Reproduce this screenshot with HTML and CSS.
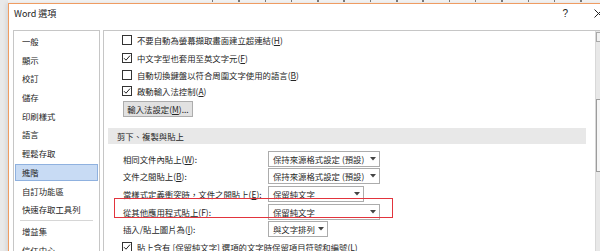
FILE: index.html
```html
<!DOCTYPE html>
<html lang="zh-Hant">
<head>
<meta charset="utf-8">
<title>Word 選項</title>
<link rel="stylesheet" href="styles.css">
</head>
<body>
<div class="ruler"><div class="ticks"></div></div>
<div class="dialog">
  <div class="titlebar">
    <span class="title">Word 選項</span>
    <span class="help">?</span>
    <svg class="close" width="9" height="9" viewBox="0 0 9 9"><path d="M0.5 0.5L8.5 8.5M8.5 0.5L0.5 8.5" stroke="#222" stroke-width="1"/></svg>
  </div>
  <div class="main">
    <nav class="nav">
      <div class="item">一般</div>
      <div class="item">顯示</div>
      <div class="item">校訂</div>
      <div class="item">儲存</div>
      <div class="item">印刷樣式</div>
      <div class="item">語言</div>
      <div class="item">輕鬆存取</div>
      <div class="item sel">進階</div>
      <div class="item">自訂功能區</div>
      <div class="item">快速存取工具列</div>
      <div class="sep"></div>
      <div class="item">增益集</div>
      <div class="item">信任中心</div>
    </nav>
    <section class="panel">
      <div class="scrollarea">
        <div class="chk-row first">
          <svg class="chk" width="10" height="10" viewBox="0 0 10 10"><rect x="0.5" y="0.5" width="9" height="9" fill="#fff" stroke="#333"/></svg>
          <span>不要自動為螢幕擷取畫面建立超連結(<u>H</u>)</span>
        </div>
        <div class="chk-row">
          <svg class="chk" width="10" height="10" viewBox="0 0 10 10"><rect x="0.5" y="0.5" width="9" height="9" fill="#fff" stroke="#333"/><path d="M2 5.2L4 7.2L8 2.6" fill="none" stroke="#222" stroke-width="1"/></svg>
          <span>中文字型也套用至英文字元(<u>F</u>)</span>
        </div>
        <div class="chk-row">
          <svg class="chk" width="10" height="10" viewBox="0 0 10 10"><rect x="0.5" y="0.5" width="9" height="9" fill="#fff" stroke="#333"/></svg>
          <span>自動切換鍵盤以符合周圍文字使用的語言(<u>B</u>)</span>
        </div>
        <div class="chk-row">
          <svg class="chk" width="10" height="10" viewBox="0 0 10 10"><rect x="0.5" y="0.5" width="9" height="9" fill="#fff" stroke="#333"/><path d="M2 5.2L4 7.2L8 2.6" fill="none" stroke="#222" stroke-width="1"/></svg>
          <span>啟動輸入法控制(<u>A</u>)</span>
        </div>
        <div class="button">輸入法設定(<u>M</u>)...</div>
        <div class="section">剪下、複製與貼上</div>
        <div class="form">
          <span class="label">相同文件內貼上(<u>W</u>):</span>
          <div class="dd w112"><span>保持來源格式設定 (預設)</span><svg width="6" height="4" viewBox="0 0 6 4"><path d="M0 0H6L3 3.5Z" fill="#444"/></svg></div>
          <span class="label">文件之間貼上(<u>B</u>):</span>
          <div class="dd w112"><span>保持來源格式設定 (預設)</span><svg width="6" height="4" viewBox="0 0 6 4"><path d="M0 0H6L3 3.5Z" fill="#444"/></svg></div>
          <span class="label">當樣式定義衝突時，文件之間貼上(<u>E</u>):</span>
          <div class="dd w96"><span>保留純文字</span><svg width="6" height="4" viewBox="0 0 6 4"><path d="M0 0H6L3 3.5Z" fill="#444"/></svg></div>
          <span class="label">從其他應用程式貼上(<u>F</u>):</span>
          <div class="dd w112"><span>保留純文字</span><svg width="6" height="4" viewBox="0 0 6 4"><path d="M0 0H6L3 3.5Z" fill="#444"/></svg></div>
          <span class="label">插入/貼上圖片為(<u>I</u>):</span>
          <div class="dd w60"><span>與文字排列</span><svg width="6" height="4" viewBox="0 0 6 4"><path d="M0 0H6L3 3.5Z" fill="#444"/></svg></div>
        </div>
        <div class="chk-row last">
          <svg class="chk" width="10" height="10" viewBox="0 0 10 10"><rect x="0.5" y="0.5" width="9" height="9" fill="#fff" stroke="#333"/><path d="M2 5.2L4 7.2L8 2.6" fill="none" stroke="#222" stroke-width="1"/></svg>
          <span>貼上含有 [保留純文字] 選項的文字時保留項目符號和編號(<u>L</u>)</span>
        </div>
        <div class="highlight"></div>
      </div>
      <div class="scrollbar">
        <div class="sb-up"><svg width="5" height="3" viewBox="0 0 5 3"><path d="M0 3L2.5 0L5 3Z" fill="#555"/></svg></div>
        <div class="sb-thumb"></div>
      </div>
    </section>
  </div>
</div>
</body>
</html>
```
FILE: styles.css
```css
html, body {
  margin: 0;
  padding: 0;
}
body {
  width: 600px;
  height: 251px;
  overflow: hidden;
  background: #e9e9e9;
  font-family: "Noto Sans CJK TC", "Noto Sans", sans-serif;
  font-size: 8.4px;
  color: #262626;
}
u {
  text-decoration: underline;
  text-underline-offset: 1px;
}
.ruler {
  margin-left: 8px;
  width: 620px;
  height: 3px;
  background: #f3f3f3;
}
.ticks {
  margin-left: 204px;
  height: 2px;
  background-image: repeating-linear-gradient(90deg, #7a7a7a 0, #7a7a7a 1.5px, transparent 1.5px, transparent 26.3px);
}
.dialog {
  margin-left: 8px;
  width: 610px;
  height: 260px;
  background: #fff;
  border-top: 1px solid #ef9c62;
  border-left: 1px solid #ef9c62;
  box-shadow: -2px 0 4px rgba(0, 0, 0, 0.08);
}
.titlebar {
  height: 26px;
  box-sizing: border-box;
  padding: 4px 0 0 5px;
  display: flex;
  align-items: flex-start;
}
.title {
  font-size: 9px;
  line-height: 12px;
  color: #222;
  flex: 1;
}
.help {
  font-family: "Liberation Sans", sans-serif;
  font-size: 10px;
  line-height: 11px;
  color: #222;
  margin-right: 26px;
}
.close {
  margin-top: 1px;
  margin-right: 16px;
}
.main {
  display: flex;
  align-items: flex-start;
  padding-left: 4px;
  gap: 3px;
}
.nav {
  width: 87px;
  height: 240px;
  box-sizing: border-box;
  border: 1px solid #c6c6c6;
  padding-top: 1px;
}
.item {
  height: 18.7px;
  line-height: 18.7px;
  padding-left: 8px;
  white-space: nowrap;
}
.item.sel {
  height: 17px;
  line-height: 15px;
  margin: 0.85px 1px;
  padding-left: 6px;
  box-sizing: border-box;
  border: 1px solid #8fb1df;
  background: #c8dbf4;
}
.sep {
  height: 1px;
  margin: 1px 6px;
  background: #d6d6d6;
}
.panel {
  width: 509px;
  height: 240px;
  box-sizing: border-box;
  border: 1px solid #c6c6c6;
  display: flex;
}
.scrollarea {
  flex: 1;
  position: relative;
  padding-top: 1px;
}
.chk-row {
  display: flex;
  align-items: center;
  gap: 5px;
  height: 16.3px;
  padding-left: 18px;
  white-space: nowrap;
}
.chk-row.first {
  margin-bottom: 2px;
}
.chk-row.last {
  margin-top: 0.6px;
}
.chk {
  flex: none;
}
.button {
  margin: 2px 0 0 19px;
  width: 70px;
  height: 16px;
  box-sizing: border-box;
  border: 1px solid #adadad;
  background: #e1e1e1;
  display: flex;
  align-items: center;
  justify-content: center;
  white-space: nowrap;
}
.section {
  margin: 10.7px 9px 0 4px;
  height: 16px;
  line-height: 16px;
  padding-left: 9px;
  background: #e8e8e8;
}
.form {
  margin-top: 6.2px;
  padding-left: 19px;
  display: grid;
  grid-template-columns: 145px auto;
  grid-auto-rows: 17.6px;
  align-items: center;
  justify-items: start;
}
.label {
  white-space: nowrap;
}
.dd {
  height: 16px;
  box-sizing: border-box;
  border: 1px solid #acacac;
  background: #fff;
  display: flex;
  align-items: center;
  justify-content: space-between;
  padding: 0 3px 0 4px;
  white-space: nowrap;
}
.w112 { width: 112px; }
.w96 { width: 96px; }
.w60 { width: 60px; }
.highlight {
  position: absolute;
  left: 10px;
  top: 167px;
  width: 279px;
  height: 20px;
  box-sizing: border-box;
  border: 1px solid #e2343d;
}
.scrollbar {
  width: 16px;
  flex: none;
  background: #e8e8e8;
  border-left: 1px solid #d8d8d8;
  box-sizing: border-box;
}
.sb-up {
  margin-top: 1px;
  height: 8px;
  border: 1px solid #a8a8a8;
  background: #f2f2f2;
  display: flex;
  align-items: center;
  justify-content: center;
}
.sb-thumb {
  margin-top: 57px;
  height: 71px;
  border: 1px solid #9c9c9c;
  background: #f6f6f6;
}
```
